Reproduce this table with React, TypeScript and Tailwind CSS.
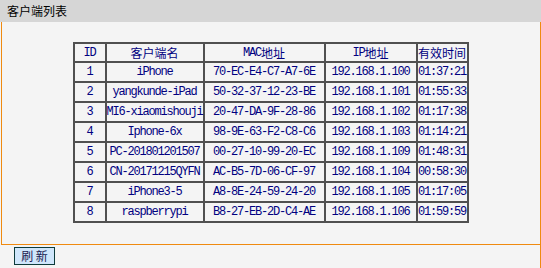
import React from "react";

const rows = [
  ["1", "iPhone", "70-EC-E4-C7-A7-6E", "192.168.1.100", "01:37:21"],
  ["2", "yangkunde-iPad", "50-32-37-12-23-BE", "192.168.1.101", "01:55:33"],
  ["3", "MI6-xiaomishouji", "20-47-DA-9F-28-86", "192.168.1.102", "01:17:38"],
  ["4", "Iphone-6x", "98-9E-63-F2-C8-C6", "192.168.1.103", "01:14:21"],
  ["5", "PC-201801201507", "00-27-10-99-20-EC", "192.168.1.109", "01:48:31"],
  ["6", "CN-20171215QYFN", "AC-B5-7D-06-CF-97", "192.168.1.104", "00:58:30"],
  ["7", "iPhone3-5", "A8-8E-24-59-24-20", "192.168.1.105", "01:17:05"],
  ["8", "raspberrypi", "B8-27-EB-2D-C4-AE", "192.168.1.106", "01:59:59"],
];

const mono = "font-['Liberation_Mono',monospace] text-[12px] tracking-[-1.2px]";
const cjk = "font-['Noto_Sans_CJK_SC',sans-serif] text-[12px]";

export default function App() {
  return (
    <div className="w-[541px] h-[268px] bg-[#f4f4f4] flex flex-col overflow-hidden">
      <div className={`h-[22px] shrink-0 bg-[#d6d6d6] pl-[7px] flex items-center text-black ${cjk}`}>
        客户端列表
      </div>
      <div className="flex-1 flex flex-col border-r border-[#ef8a10]">
        <div className="h-[223px] shrink-0 ml-[1px] border-l border-b border-[#ef8a10] pt-[20px] flex justify-center">
          <div className="self-start ml-[-1px] grid grid-cols-[30px_96px_119px_90px_49px] grid-rows-[17px_repeat(8,18px)] gap-[2px] p-[2px] bg-[#505050] text-[#000080]">
            <div className={`bg-[#f4f4f4] flex items-center justify-center ${mono}`}>ID</div>
            <div className={`bg-[#f4f4f4] flex items-center justify-center ${cjk}`}>客户端名</div>
            <div className={`bg-[#f4f4f4] flex items-center justify-center ${cjk}`}>
              <span className={mono}>MAC</span>地址
            </div>
            <div className={`bg-[#f4f4f4] flex items-center justify-center ${cjk}`}>
              <span className={mono}>IP</span>地址
            </div>
            <div className={`bg-[#f4f4f4] flex items-center justify-center whitespace-nowrap ${cjk}`}>有效时间</div>
            {rows.map((r) =>
              r.map((c, i) => (
                <div
                  key={r[0] + "-" + i}
                  className={`bg-[#f4f4f4] flex items-center justify-center whitespace-nowrap overflow-visible ${mono}`}
                >
                  {c}
                </div>
              ))
            )}
          </div>
        </div>
        <div className="pl-[14px] pt-[2px]">
          <button className={`w-[41px] h-[18px] border border-[#0d3b3b] bg-[#cfe6fb] text-[#1a1a50] flex items-center justify-center leading-none ${cjk}`}>
            刷 新
          </button>
        </div>
      </div>
    </div>
  );
}
